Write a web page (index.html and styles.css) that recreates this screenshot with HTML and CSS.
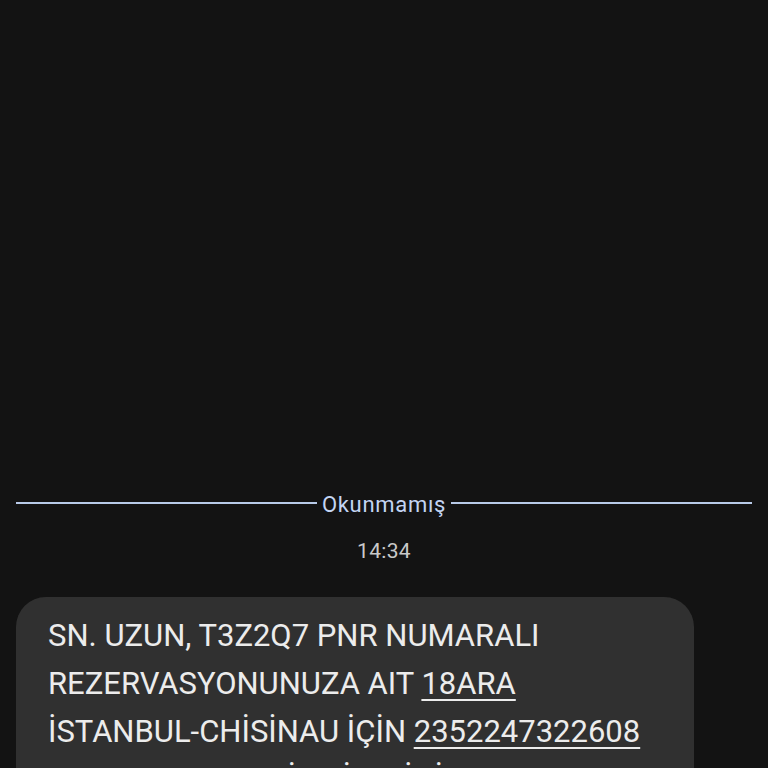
FILE: index.html
```html
<!DOCTYPE html>
<html>

<head>
  <meta charset="utf-8">
  <link rel="stylesheet" href="styles.css">
</head>

<body>
  <main class="thread">
    <div class="divider">
      <span class="divider-line"></span>
      <span class="divider-label">Okunmamış</span>
      <span class="divider-line"></span>
    </div>

    <div class="timestamp">14:34</div>

    <div class="bubble">
      <p class="bubble-text">
        SN. UZUN, T3Z2Q7 PNR NUMARALI<br>
        REZERVASYONUNUZA AIT <span class="link">18ARA</span><br>
        İSTANBUL-CHİSİNAU İÇİN <span class="link">2352247322608</span><br>
        NOLU ELEKTRONİK BİLETİNİZ
      </p>
    </div>
  </main>
</body>

</html>
```

FILE: styles.css
```css
html,
body {
  margin: 0;
  height: 768px;
  overflow: hidden;
  background: #131313;
  font-family: Roboto, 'Noto Sans', sans-serif;
}

.thread {
  padding: 491px 16px 0;
}

.divider {
  display: flex;
  align-items: center;
  gap: 5px;
}

.divider-line {
  flex: 1;
  height: 2px;
  margin-top: -3px;
  background: #b8cae8;
}

.divider-label {
  font-size: 22px;
  line-height: 27px;
  letter-spacing: 0.7px;
  color: #c3d5f3;
}

.timestamp {
  margin-top: 20px;
  text-align: center;
  font-size: 21px;
  line-height: 26px;
  letter-spacing: 0.3px;
  color: #c9c9c9;
}

.bubble {
  width: 678px;
  box-sizing: border-box;
  margin-top: 33px;
  padding: 15px 32px 20px;
  border-radius: 30px;
  background: #303030;
}

.bubble-text {
  margin: 0;
  font-size: 31px;
  line-height: 48px;
  color: #ececec;
}

.link {
  text-decoration: underline;
  text-decoration-thickness: 2px;
  text-underline-offset: 5px;
}
```
